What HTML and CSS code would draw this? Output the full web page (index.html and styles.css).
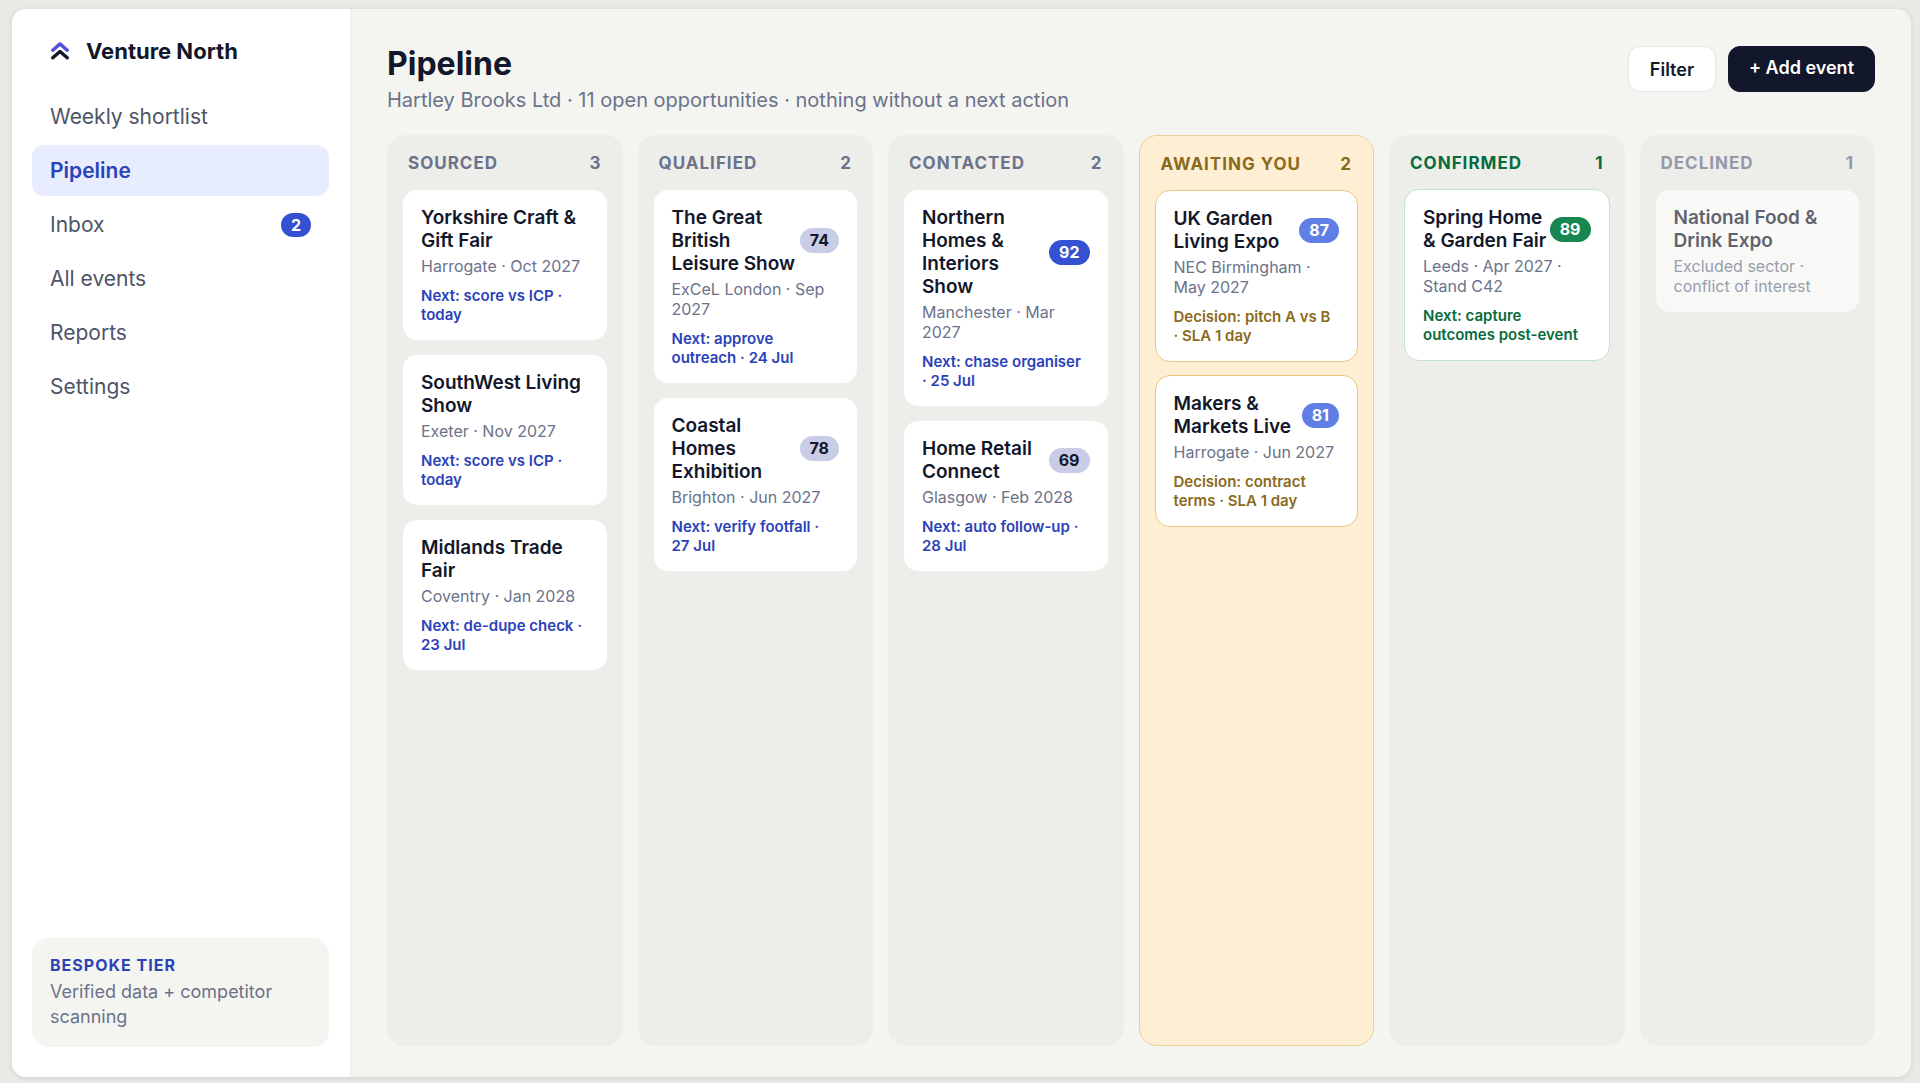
FILE: index.html
```html
<!DOCTYPE html>
<html lang="en">
<head>
<meta charset="utf-8">
<meta name="viewport" content="width=device-width, initial-scale=1">
<title>Pipeline – Venture North</title>
<link rel="stylesheet" href="styles.css">
</head>
<body>
<div class="app">
  <aside class="sidebar">
    <div class="brand">
      <svg class="brand-mark" viewBox="0 0 18 20" aria-hidden="true">
        <path class="mark-top" d="M1.8 9.2 L9 2.9 L16.2 9.2"/>
        <path class="mark-bottom" d="M1.8 16.8 L9 10.4 L16.2 16.8"/>
      </svg>
      <span>Venture North</span>
    </div>
    <nav class="nav">
      <a class="nav-item" href="#shortlist">Weekly shortlist</a>
      <a class="nav-item active" href="#pipeline" aria-current="page">Pipeline</a>
      <a class="nav-item" href="#inbox">Inbox <span class="nav-badge">2</span></a>
      <a class="nav-item" href="#events">All events</a>
      <a class="nav-item" href="#reports">Reports</a>
      <a class="nav-item" href="#settings">Settings</a>
    </nav>
    <div class="tier">
      <div class="tier-name">BESPOKE TIER</div>
      <p class="tier-text">Verified data + competitor scanning</p>
    </div>
  </aside>

  <main class="main">
    <header class="page-head">
      <div>
        <h1>Pipeline</h1>
        <p class="subtitle">Hartley Brooks Ltd · 11 open opportunities · nothing without a next action</p>
      </div>
      <div class="actions">
        <button class="btn" type="button">Filter</button>
        <button class="btn btn-primary" type="button">+ Add event</button>
      </div>
    </header>

    <div class="board">
      <section class="column">
        <h2 class="column-head">SOURCED <span>3</span></h2>
        <article class="card">
          <div class="card-top"><h3>Yorkshire Craft &amp; Gift Fair</h3></div>
          <p class="meta">Harrogate · Oct 2027</p>
          <p class="next">Next: score vs ICP · today</p>
        </article>
        <article class="card">
          <div class="card-top"><h3>SouthWest Living Show</h3></div>
          <p class="meta">Exeter · Nov 2027</p>
          <p class="next">Next: score vs ICP · today</p>
        </article>
        <article class="card">
          <div class="card-top"><h3>Midlands Trade Fair</h3></div>
          <p class="meta">Coventry · Jan 2028</p>
          <p class="next">Next: de-dupe check · 23 Jul</p>
        </article>
      </section>

      <section class="column">
        <h2 class="column-head">QUALIFIED <span>2</span></h2>
        <article class="card">
          <div class="card-top"><h3>The Great British Leisure Show</h3><span class="score low">74</span></div>
          <p class="meta">ExCeL London · Sep 2027</p>
          <p class="next">Next: approve outreach · 24 Jul</p>
        </article>
        <article class="card">
          <div class="card-top"><h3>Coastal Homes Exhibition</h3><span class="score low">78</span></div>
          <p class="meta">Brighton · Jun 2027</p>
          <p class="next">Next: verify footfall · 27 Jul</p>
        </article>
      </section>

      <section class="column">
        <h2 class="column-head">CONTACTED <span>2</span></h2>
        <article class="card">
          <div class="card-top"><h3>Northern Homes &amp; Interiors Show</h3><span class="score top">92</span></div>
          <p class="meta">Manchester · Mar 2027</p>
          <p class="next">Next: chase organiser ·&nbsp;25 Jul</p>
        </article>
        <article class="card">
          <div class="card-top"><h3>Home Retail Connect</h3><span class="score low">69</span></div>
          <p class="meta">Glasgow · Feb 2028</p>
          <p class="next">Next: auto follow-up · 28 Jul</p>
        </article>
      </section>

      <section class="column awaiting">
        <h2 class="column-head">AWAITING YOU <span>2</span></h2>
        <article class="card">
          <div class="card-top"><h3>UK Garden Living Expo</h3><span class="score">87</span></div>
          <p class="meta">NEC Birmingham · May 2027</p>
          <p class="next">Decision: pitch A vs B ·&nbsp;SLA 1 day</p>
        </article>
        <article class="card">
          <div class="card-top"><h3>Makers &amp; Markets Live</h3><span class="score">81</span></div>
          <p class="meta">Harrogate · Jun 2027</p>
          <p class="next">Decision: contract terms · SLA 1 day</p>
        </article>
      </section>

      <section class="column confirmed">
        <h2 class="column-head">CONFIRMED <span>1</span></h2>
        <article class="card">
          <div class="card-top"><h3>Spring Home &amp; Garden Fair</h3><span class="score won">89</span></div>
          <p class="meta">Leeds · Apr 2027 · Stand C42</p>
          <p class="next">Next: capture outcomes post-event</p>
        </article>
      </section>

      <section class="column declined">
        <h2 class="column-head">DECLINED <span>1</span></h2>
        <article class="card">
          <div class="card-top"><h3>National Food &amp; Drink Expo</h3></div>
          <p class="meta">Excluded sector · conflict of interest</p>
        </article>
      </section>
    </div>
  </main>
</div>
</body>
</html>
```
FILE: styles.css
```css
:root {
  --ink: #12172b;
  --muted: #6b728a;
  --accent: #3451d1;
  --accent-dark: #2b42b8;
  --paper: #f4f5f0;
  --lane: #edeeea;
}

* { box-sizing: border-box; }
h1, h2, h3, p { margin: 0; }

body {
  margin: 0;
  min-height: 100vh;
  padding: 9px 9px 6px 12px;
  display: flex;
  background: #eae9e4;
  color: var(--ink);
  font-family: Inter, "Liberation Sans", sans-serif;
}

.app {
  flex: 1;
  display: flex;
  overflow: hidden;
  border-radius: 14px;
  background: var(--paper);
  box-shadow: 0 1px 5px rgba(18, 23, 43, 0.12);
}

/* Sidebar */
.sidebar {
  flex: none;
  width: 340px;
  padding: 20px 21px 30px 20px;
  display: flex;
  flex-direction: column;
  background: #fff;
  border-right: 2px solid #f0f0ee;
}

.brand {
  display: flex;
  align-items: center;
  gap: 17px;
  height: 44px;
  margin-bottom: 18px;
  padding: 0 19px;
  font-size: 22px;
  font-weight: 700;
}

.brand-mark { width: 18px; height: 20px; }
.brand-mark path {
  fill: none;
  stroke-width: 3.4;
  stroke-linecap: round;
  stroke-linejoin: round;
}
.mark-top { stroke: #4f4fe0; }
.mark-bottom { stroke: var(--ink); }

.nav { display: flex; flex-direction: column; gap: 3px; }
.nav-item {
  display: flex;
  align-items: center;
  justify-content: space-between;
  height: 51px;
  padding: 0 18px;
  border-radius: 12px;
  color: #4d5468;
  font-size: 21px;
  text-decoration: none;
}
.nav-item.active {
  background: #e7edff;
  color: var(--accent-dark);
  font-weight: 600;
}
.nav-badge {
  padding: 0 10px;
  border-radius: 12px;
  background: var(--accent);
  color: #fff;
  font-size: 16px;
  font-weight: 700;
  line-height: 24px;
}

.tier {
  margin-top: auto;
  padding: 15px 18px 18px;
  border-radius: 16px;
  background: var(--paper);
}
.tier-name {
  margin-bottom: 2px;
  color: var(--accent-dark);
  font-size: 16px;
  font-weight: 700;
  line-height: 24px;
  letter-spacing: 1px;
}
.tier-text {
  color: var(--muted);
  font-size: 18px;
  line-height: 25px;
}

/* Page */
.main {
  flex: 1;
  min-width: 0;
  padding: 37px 36px 31px 35px;
  display: flex;
  flex-direction: column;
}
.page-head {
  display: flex;
  align-items: flex-start;
  justify-content: space-between;
  margin-bottom: 22px;
}
h1 {
  margin-bottom: 5px;
  font-size: 32px;
  font-weight: 700;
  line-height: 36px;
}
.subtitle {
  color: var(--muted);
  font-size: 20px;
  line-height: 26px;
}

.actions { display: flex; gap: 12px; }
.btn {
  min-width: 88px;
  height: 46px;
  padding: 0 20px;
  border: 1px solid #e4e5e6;
  border-radius: 12px;
  background: #fff;
  color: var(--ink);
  font: inherit;
  font-size: 18px;
  font-weight: 600;
}
.btn-primary {
  padding-bottom: 4px;
  border-color: var(--ink);
  background: var(--ink);
  color: #fff;
}

/* Board */
.board {
  flex: 1;
  display: grid;
  grid-template-columns: repeat(6, minmax(0, 1fr));
  gap: 15px;
}
.column {
  display: flex;
  flex-direction: column;
  gap: 13px;
  padding: 15px;
  border-radius: 18px;
  background: var(--lane);
}
.column-head {
  display: flex;
  justify-content: space-between;
  padding: 0 6px;
  color: var(--muted);
  font-size: 17px;
  font-weight: 700;
  line-height: 26px;
  letter-spacing: 1px;
}
.card {
  padding: 16px 18px;
  border: 1px solid #eeefec;
  border-radius: 15px;
  background: #fff;
}
.card-top {
  display: flex;
  align-items: center;
  justify-content: space-between;
}
.card h3 {
  font-size: 19px;
  font-weight: 600;
  line-height: 23px;
}
.score {
  flex: none;
  padding: 0 10px;
  border-radius: 13px;
  background: #5f7fe6;
  color: #fff;
  font-size: 16px;
  font-weight: 700;
  line-height: 25px;
}
.score.top { background: var(--accent); }
.score.low { background: #c9cce6; color: var(--ink); }
.score.won { background: #17874f; }

.meta {
  margin-top: 4px;
  color: var(--muted);
  font-size: 16px;
  line-height: 20px;
}
.next {
  margin-top: 10px;
  color: var(--accent-dark);
  font-size: 15px;
  font-weight: 600;
  line-height: 19px;
}

.awaiting {
  border: 1px solid #eed096;
  background: #feefd4;
}
.awaiting .card { border-color: #ebc67d; }
.awaiting .column-head,
.awaiting .next { color: #8a6a1c; }

.confirmed .card { border-color: #bfe3cb; }
.confirmed .column-head,
.confirmed .next { color: #076b3c; }

.declined .column-head { color: #9398ab; }
.declined .card { opacity: 0.65; }
```
